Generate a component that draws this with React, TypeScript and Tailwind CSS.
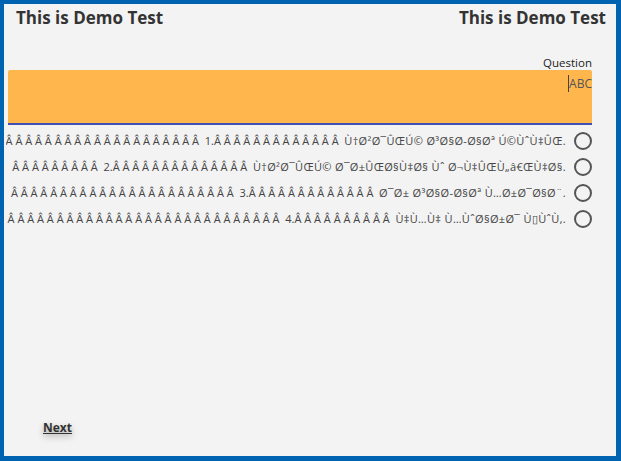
import React from "react";

// each "Â " is a UTF-8 no-break space read as cp1252
const nb = (n: number) => "Â\u00A0".repeat(n);

const options = [
  { pre: 20, mid: 13, label: "1.", text: "Ù\u2020Ø²Ø¯ÛŒÚ© Ø³Ø§Ø-Ø§Øª Ú©Ù\u02C6Ù\u2021ÛŒ." },
  { pre: 9, mid: 14, label: "2.", text: "Ù\u2020Ø²Ø¯ÛŒÚ© Ø¯Ø±ÛŒØ§Ù\u2021Ø§ Ù\u02C6 Ø¬Ù\u2021ÛŒÙ\u201Eâ€ŒÙ\u2021Ø§." },
  { pre: 23, mid: 13, label: "3.", text: "Ø¯Ø± Ø³Ø§Ø-Ø§Øª Ù\u2026Ø±Ø¯Ø§Ø¨." },
  { pre: 28, mid: 10, label: "4.", text: "Ù\u2021Ù\u2026Ù\u2021 Ù\u2026Ù\u02C6Ø§Ø±Ø¯ Ù\u25AFÙ\u02C6Ù\u201A." },
];

export default function App() {
  return (
    <div className="h-[461px] w-[621px] overflow-hidden border-[#0063b1] border-t-4 border-l-4 border-r-[5px] border-b-[5px] bg-[#f3f3f3] flex flex-col font-['Segoe_UI','Open_Sans',sans-serif] text-[#333]">
      {/* Header */}
      <div className="flex justify-between pl-[12px] pr-[10px] pt-[3px]">
        <h1 className="text-[17px] leading-[22px] font-bold">This is Demo Test</h1>
        <h1 className="text-[17px] leading-[22px] font-bold">This is Demo Test</h1>
      </div>

      {/* Question */}
      <div className="pl-[4px] pr-[24px] mt-[26px]">
        <div className="text-right text-[11.5px] leading-[15px] text-[#222]">Question</div>
        <div className="h-[55px] bg-[#ffb74d] rounded-t-[2px] border-b-2 border-[#3f51b5] flex justify-end pt-[5px]">
          <span className="flex items-start text-[12px] leading-[17px] text-[#555]">
            <span className="w-px h-[17px] bg-[#444]" />
            ABC
          </span>
        </div>
      </div>

      {/* Options */}
      <div className="pl-[2px] pr-[24px] mt-[3px] flex flex-col">
        {options.map((o) => (
          <label key={o.label} className="h-[26px] flex items-center justify-end gap-[8px] overflow-hidden">
            <span className="whitespace-nowrap text-[11px] text-[#444] shrink-0">
              {nb(o.pre)} {o.label}
              {nb(o.mid)} <span className="tracking-[0.35px]">{o.text}</span>
            </span>
            <span className="w-[18px] h-[18px] shrink-0 rounded-full border-2 border-[#555]" />
          </label>
        ))}
      </div>

      <div className="flex-1" />

      {/* Next */}
      <div className="pl-[39px] pb-[18px]">
        <button className="text-[12px] leading-[16px] font-bold underline text-[#333] [text-shadow:0_3px_6px_rgba(0,0,0,0.35)]">
          Next
        </button>
      </div>
    </div>
  );
}
